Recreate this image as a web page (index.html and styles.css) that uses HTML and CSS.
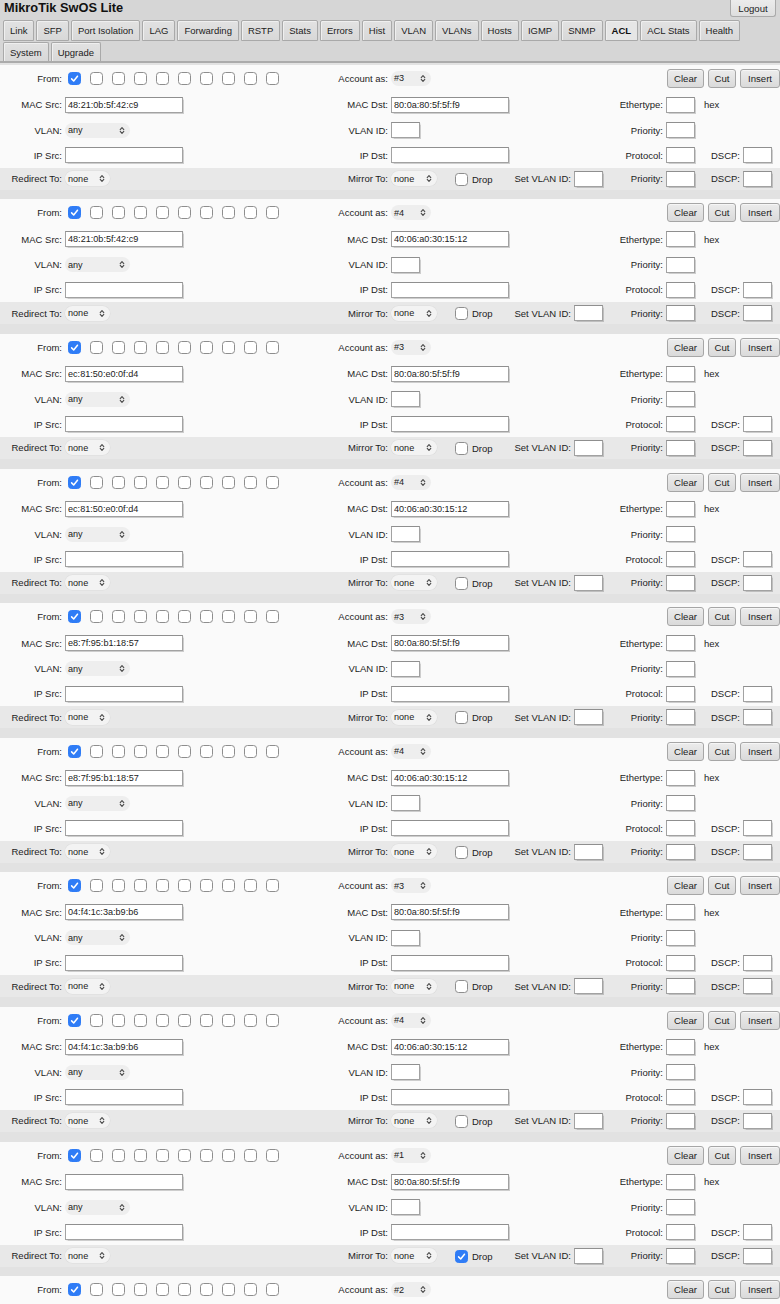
FILE: index.html
```html
<!DOCTYPE html>
<html lang="en">
<head>
<meta charset="utf-8">
<title>MikroTik SwOS Lite - ACL</title>
<link rel="stylesheet" href="styles.css">
</head>
<body>
<header class="head">
  <div class="top">
    <h1 class="title">MikroTik SwOS Lite</h1>
    <button class="logout">Logout</button>
  </div>
  <nav class="tabs">
    <div class="tabrow">
      <span class="tab">Link</span><span class="tab">SFP</span><span class="tab">Port Isolation</span><span class="tab">LAG</span><span class="tab">Forwarding</span><span class="tab">RSTP</span><span class="tab">Stats</span><span class="tab">Errors</span><span class="tab">Hist</span><span class="tab">VLAN</span><span class="tab">VLANs</span><span class="tab">Hosts</span><span class="tab">IGMP</span><span class="tab">SNMP</span><span class="tab active">ACL</span><span class="tab">ACL Stats</span><span class="tab">Health</span>
    </div>
    <div class="tabrow last">
      <span class="tab">System</span><span class="tab">Upgrade</span>
    </div>
  </nav>
  <div class="rule"></div>
</header>

<main id="acl" class="acl-list"></main>

<template id="rule-tpl">
  <section class="acl">
    <div class="row">
      <span class="l">From:</span>
      <span class="ports"></span>
      <span class="l">Account as:</span>
      <span class="c"><span class="sel w-acc"><span class="acc"></span><svg class="chev" viewBox="0 0 6 9"><path d="M1.2 3.6 3 1.6 4.8 3.6M1.2 5.4 3 7.4 4.8 5.4"/></svg></span></span>
      <span class="btns"><button class="btn">Clear</button><button class="btn">Cut</button><button class="btn">Insert</button></span>
    </div>
    <div class="row">
      <span class="l">MAC Src:</span>
      <span class="c"><input class="in long src" type="text"></span>
      <span class="l">MAC Dst:</span>
      <span class="c"><input class="in long dst" type="text"></span>
      <span class="l">Ethertype:</span>
      <span class="c"><input class="in short" type="text"></span>
      <span class="hex">hex</span>
    </div>
    <div class="row">
      <span class="l">VLAN:</span>
      <span class="c"><span class="sel w-any">any<svg class="chev" viewBox="0 0 6 9"><path d="M1.2 3.6 3 1.6 4.8 3.6M1.2 5.4 3 7.4 4.8 5.4"/></svg></span></span>
      <span class="l">VLAN ID:</span>
      <span class="c"><input class="in short" type="text"></span>
      <span class="l">Priority:</span>
      <span class="c"><input class="in short" type="text"></span>
    </div>
    <div class="row">
      <span class="l">IP Src:</span>
      <span class="c"><input class="in long" type="text"></span>
      <span class="l">IP Dst:</span>
      <span class="c"><input class="in long" type="text"></span>
      <span class="l">Protocol:</span>
      <span class="c"><input class="in short" type="text"></span>
      <span class="l">DSCP:</span>
      <span class="c"><input class="in short" type="text"></span>
    </div>
    <div class="row act">
      <span class="l">Redirect To:</span>
      <span class="c"><span class="sel w-none">none<svg class="chev" viewBox="0 0 6 9"><path d="M1.2 3.6 3 1.6 4.8 3.6M1.2 5.4 3 7.4 4.8 5.4"/></svg></span></span>
      <span class="l">Mirror To:</span>
      <span class="c mirror">
        <span class="sel w-none2">none<svg class="chev" viewBox="0 0 6 9"><path d="M1.2 3.6 3 1.6 4.8 3.6M1.2 5.4 3 7.4 4.8 5.4"/></svg></span>
        <span class="drop"><span class="cb dropbox"><svg viewBox="0 0 13 13"><path d="M3.6 6.9 5.7 9 9.5 4.2"/></svg></span>Drop</span>
        <span class="setvlan">Set VLAN ID: <input class="in short" type="text"></span>
      </span>
      <span class="l">Priority:</span>
      <span class="c"><input class="in short" type="text"></span>
      <span class="l">DSCP:</span>
      <span class="c"><input class="in short" type="text"></span>
    </div>
  </section>
</template>

<script src="app.js"></script>
</body>
</html>
```

FILE: styles.css
```css
* { box-sizing: border-box; }

html, body {
  margin: 0;
  padding: 0;
}

body {
  width: 780px;
  background: #e2e2e2;
  font-family: "Liberation Sans", Arial, Helvetica, sans-serif;
  font-size: 9.5px;
  color: #1c1c1c;
}

/* ---------- header ---------- */
.head {
  background: #d6d6d6;
}

.top {
  height: 19px;
  display: flex;
  justify-content: space-between;
  align-items: flex-start;
}

.title {
  margin: 0 0 0 4px;
  font-size: 12.8px;
  line-height: 15px;
  font-weight: bold;
  color: #111;
}

.logout {
  margin: 0 4px 0 0;
  width: 46px;
  height: 17px;
  padding: 0;
  font: inherit;
  font-size: 9.6px;
  color: #222;
  background: linear-gradient(#ececec, #dedede);
  border: 1px solid #aaa;
  border-top: 0;
  border-radius: 0 0 3px 3px;
}

.tabs {
  padding-left: 3px;
}

.tabrow {
  display: flex;
  gap: 2px;
  height: 21px;
  margin-top: 1px;
}

.tabrow.last {
  height: 19px;
}

.tab {
  display: flex;
  align-items: center;
  padding: 0 6px;
  border: 1px solid #a9a9a9;
  border-radius: 2px 2px 0 0;
  background: linear-gradient(#e2e2e2, #d8d8d8);
  box-shadow: inset 1px 1px 0 #efefef;
  color: #222;
}

.tabrow.last .tab {
  border-bottom: 0;
}

.tab.active {
  font-weight: bold;
  background: #e6e6e6;
  color: #111;
}

.rule {
  height: 2px;
  background: #ababab;
  margin-bottom: 1.8px;
}

/* ---------- ACL rules ---------- */
.acl {
  margin-bottom: 9.6px;
}

.row {
  display: grid;
  grid-template-columns: 62px 235px 85px 212px 57px 34px 37px 35px;
  column-gap: 3px;
  align-items: center;
  height: 25px;
  background: #fafafa;
}

.row:first-child { height: 27px; }
.row:nth-child(2) { height: 26px; }

.row.act {
  height: 22px;
  background: #e8e8e8;
}

.l {
  text-align: right;
  white-space: nowrap;
}

.c {
  display: flex;
  align-items: center;
}

.hex {
  padding-left: 1px;
}

.ports {
  display: flex;
  gap: 9px;
  padding-left: 3px;
}

.btns {
  grid-column: 5 / -1;
  display: flex;
  justify-content: flex-end;
  gap: 4px;
  margin-right: -2px;
}

.btn {
  height: 19px;
  padding: 0 5px;
  font: inherit;
  font-size: 9.6px;
  color: #222;
  background: linear-gradient(#ececec, #dadada);
  border: 1px solid #a6a6a6;
  border-radius: 3px;
  box-shadow: inset 0 1px 0 #f6f6f6;
}

.btn:first-child { width: 37px; }
.btn:nth-child(2) { width: 28px; }
.btn:last-child { width: 40px; }

/* text fields */
.in {
  height: 16px;
  padding: 0 2px;
  margin: 0;
  font-family: "Liberation Sans", Arial, Helvetica, sans-serif;
  font-size: 9.1px;
  color: #222;
  background: #fff;
  border: 1px solid #a2a2a2;
  border-top-color: #8f8f8f;
  border-radius: 0;
  box-shadow: 0.5px 0.5px 1px rgba(0, 0, 0, 0.18);
  outline: none;
}

.in.long { width: 118px; }
.in.short { width: 29px; }

/* drop-down look-alikes */
.sel {
  display: inline-flex;
  align-items: center;
  justify-content: space-between;
  height: 15px;
  padding: 0 5px 0 3px;
  font-size: 9.1px;
  color: #222;
  background: #eeeeee;
  border-radius: 8px;
}

.row.act .sel {
  background: #f3f3f3;
  box-shadow: 0 0 0 0.5px #dcdcdc;
}

.sel.w-any { width: 65px; }
.sel.w-none { width: 45px; }
.sel.w-none2 { width: 46px; }
.sel.w-acc { width: 40px; }

.chev {
  width: 6px;
  height: 9px;
  fill: none;
  stroke: #4a4a4a;
  stroke-width: 1.1;
  stroke-linecap: round;
  stroke-linejoin: round;
}

/* check boxes */
.cb {
  display: inline-block;
  width: 13px;
  height: 13px;
  border: 1px solid #8e8e8e;
  border-radius: 3.5px;
  background: #fff;
}

.cb svg {
  display: none;
  width: 13px;
  height: 13px;
  margin: -1px;
  fill: none;
  stroke: #fff;
  stroke-width: 1.5;
  stroke-linecap: round;
  stroke-linejoin: round;
}

.cb.on {
  background: #2f7cf6;
  border-color: #2f7cf6;
}

.cb.on svg { display: block; }

.mirror {
  justify-content: flex-start;
}

.drop {
  display: inline-flex;
  align-items: center;
  gap: 4px;
  margin-left: 18px;
  padding-top: 1px;
}

.setvlan {
  display: inline-flex;
  align-items: center;
  gap: 3px;
  margin-left: auto;
}
```

FILE: app.js
```js
// ACL rule table: one entry per rule
const rules = [
  { acc: "#3", src: "48:21:0b:5f:42:c9", dst: "80:0a:80:5f:5f:f9", drop: false },
  { acc: "#4", src: "48:21:0b:5f:42:c9", dst: "40:06:a0:30:15:12", drop: false },
  { acc: "#3", src: "ec:81:50:e0:0f:d4", dst: "80:0a:80:5f:5f:f9", drop: false },
  { acc: "#4", src: "ec:81:50:e0:0f:d4", dst: "40:06:a0:30:15:12", drop: false },
  { acc: "#3", src: "e8:7f:95:b1:18:57", dst: "80:0a:80:5f:5f:f9", drop: false },
  { acc: "#4", src: "e8:7f:95:b1:18:57", dst: "40:06:a0:30:15:12", drop: false },
  { acc: "#3", src: "04:f4:1c:3a:b9:b6", dst: "80:0a:80:5f:5f:f9", drop: false },
  { acc: "#4", src: "04:f4:1c:3a:b9:b6", dst: "40:06:a0:30:15:12", drop: false },
  { acc: "#1", src: "", dst: "80:0a:80:5f:5f:f9", drop: true },
  { acc: "#2", src: "", dst: "", drop: false }
];

const PORTS = 10;
const tpl = document.getElementById("rule-tpl");
const list = document.getElementById("acl");
const check = '<svg viewBox="0 0 13 13"><path d="M3.6 6.9 5.7 9 9.5 4.2"/></svg>';

rules.forEach((r) => {
  const node = tpl.content.cloneNode(true);
  const ports = node.querySelector(".ports");
  for (let i = 0; i < PORTS; i++) {
    const box = document.createElement("span");
    box.className = "cb" + (i === 0 ? " on" : "");
    box.innerHTML = check;
    ports.appendChild(box);
  }
  node.querySelector(".acc").textContent = r.acc;
  node.querySelector(".src").value = r.src;
  node.querySelector(".dst").value = r.dst;
  if (r.drop) node.querySelector(".dropbox").classList.add("on");
  list.appendChild(node);
});
```
